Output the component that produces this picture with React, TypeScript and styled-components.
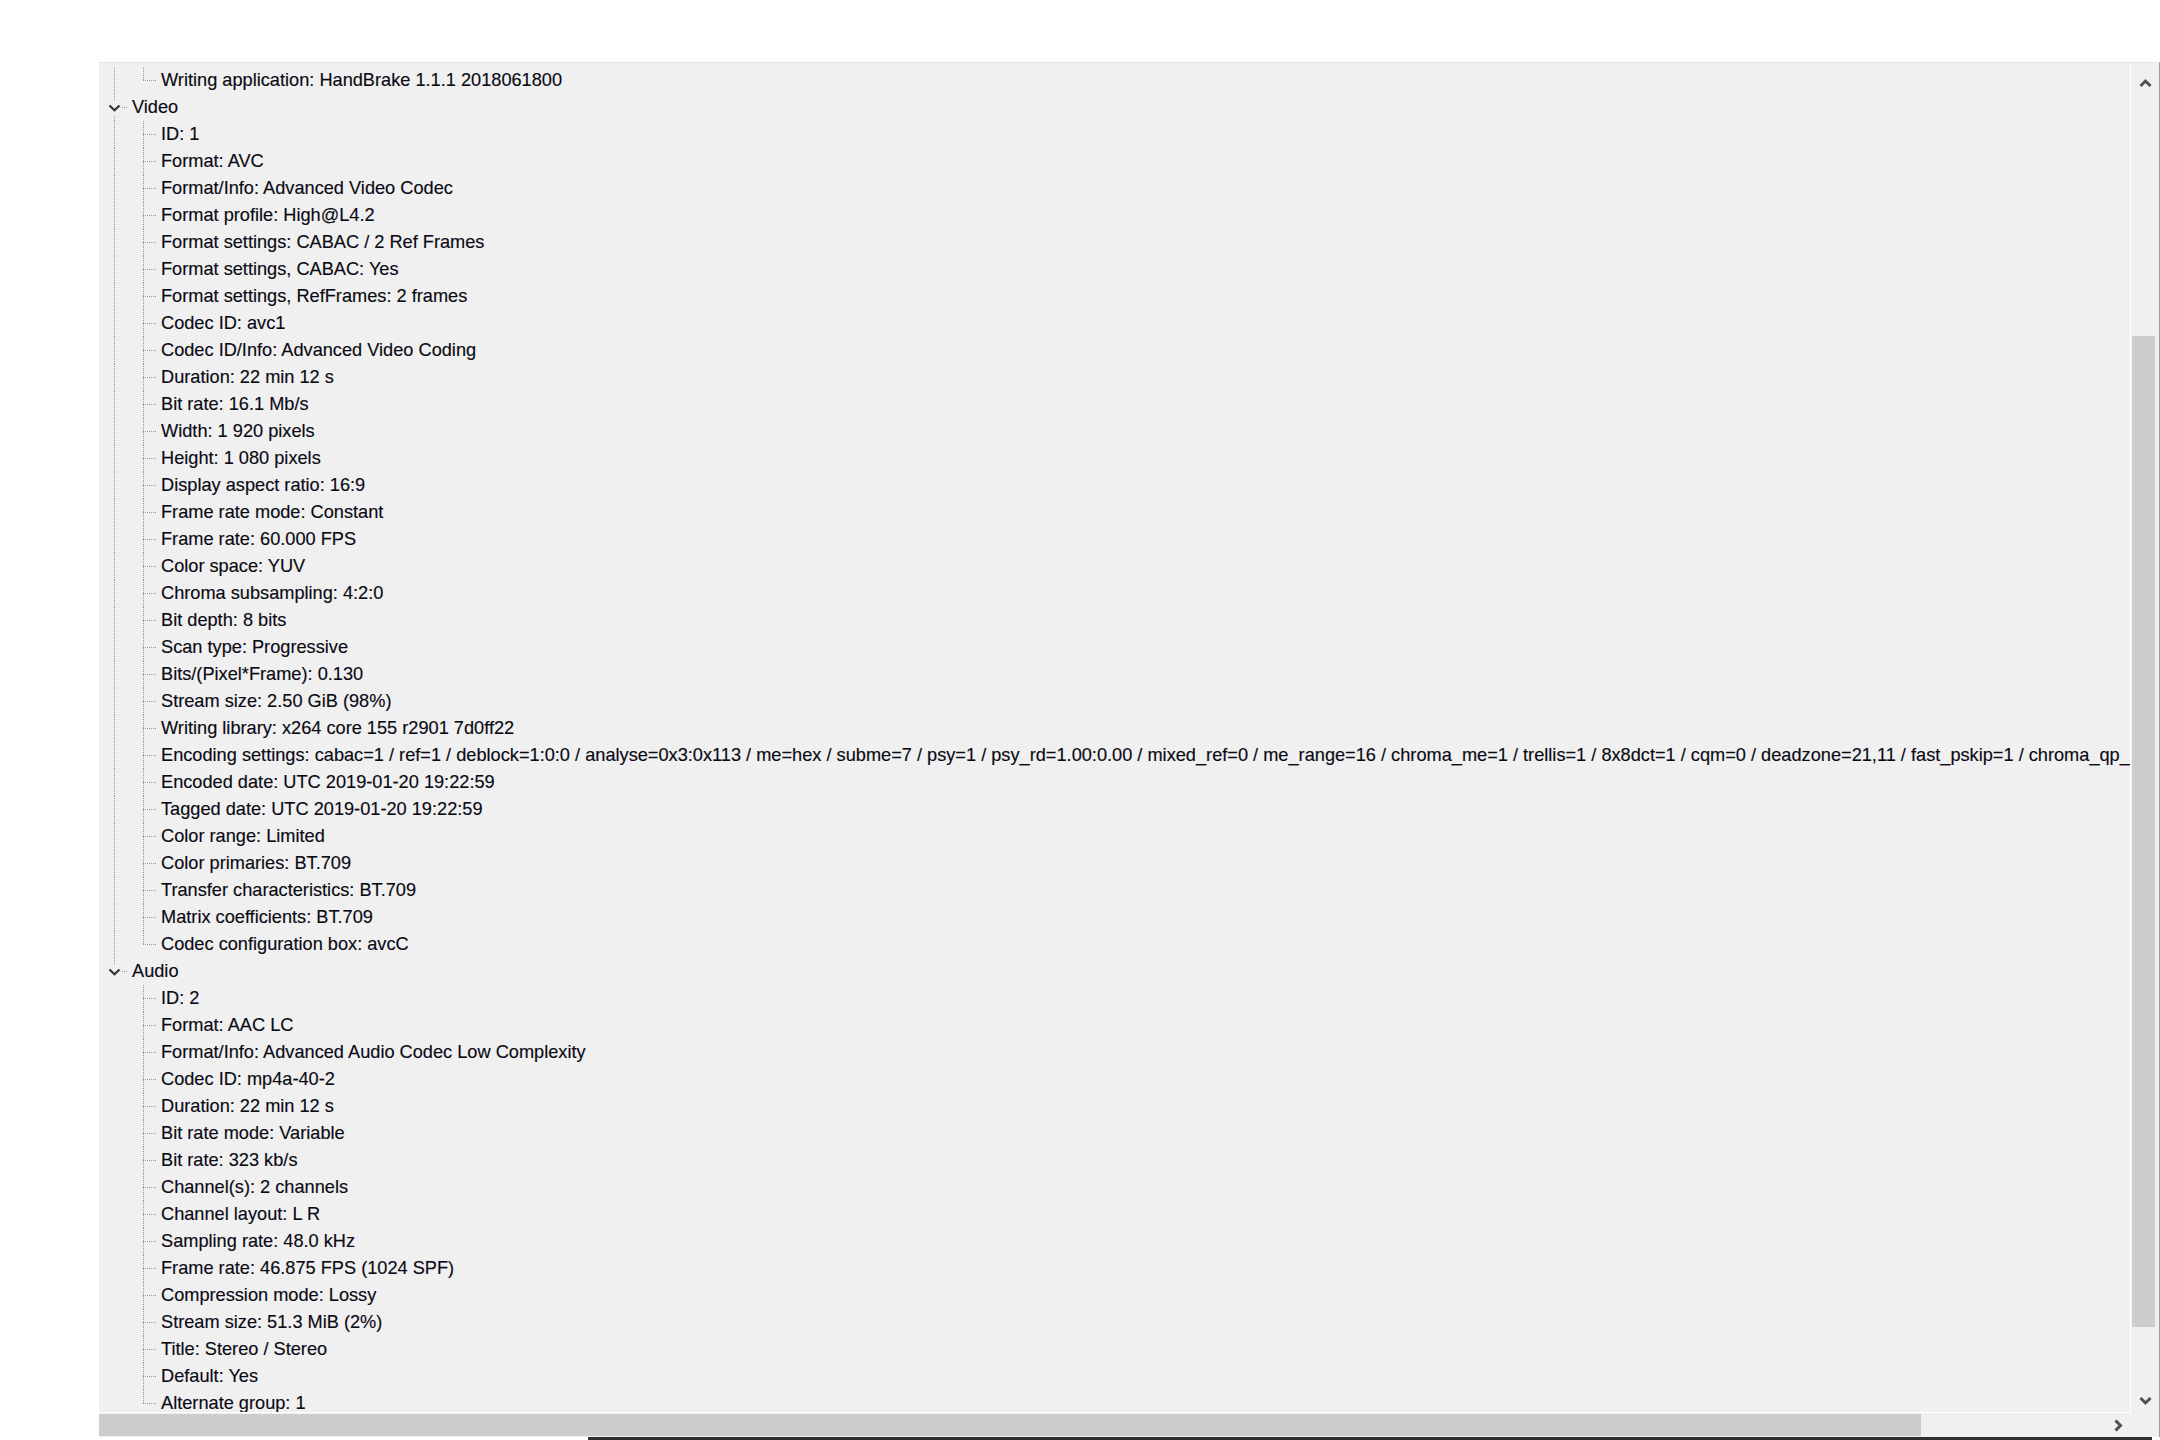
import React from 'react';
import styled, { createGlobalStyle, css } from 'styled-components';

const GlobalStyle = createGlobalStyle`
  html, body {
    margin: 0;
    padding: 0;
    background: #ffffff;
  }
  body {
    font-family: 'Liberation Sans', Arial, sans-serif;
  }
`;

const Page = styled.div`
  width: 2160px;
  height: 1440px;
  padding: 62px 0 0 99px;
  box-sizing: border-box;
  display: flex;
  flex-direction: column;
  overflow: hidden;
`;

const Panel = styled.section`
  width: 2061px;
  height: 1375px;
  box-sizing: border-box;
  border-top: 1px solid #e4e4e4;
  border-right: 1px solid #9c9c9c;
  background: #f0f0f0;
  display: grid;
  grid-template-columns: 1fr 28px;
  grid-template-rows: 1fr 24px;
`;

const TreeView = styled.div`
  border-right: 1px solid #ffffff;
  border-bottom: 1px solid #ffffff;
  padding-top: 4px;
  overflow: hidden;
  font-size: 18.2px;
  color: #0a0a14;
  -webkit-text-stroke: 0.15px #0a0a14;
`;

const Row = styled.div`
  height: 27px;
  display: flex;
  align-items: center;
  white-space: nowrap;
`;

const dotV = 'repeating-linear-gradient(to bottom, #999999 0 1px, transparent 1px 2px)';
const dotH = 'repeating-linear-gradient(to right, #999999 0 1px, transparent 1px 2px)';

type GuideKind = 'pipe' | 'tee' | 'elbow' | 'blank';

const guideStyles: Record<GuideKind, ReturnType<typeof css>> = {
  pipe: css`
    background-image: ${dotV};
    background-size: 1px 100%;
    background-position: 15px 0;
  `,
  tee: css`
    background-image: ${dotV}, ${dotH};
    background-size: 1px 100%, 14px 1px;
    background-position: 15px 0, 15px 13px;
  `,
  elbow: css`
    background-image: ${dotV}, ${dotH};
    background-size: 1px 14px, 14px 1px;
    background-position: 15px 0, 15px 13px;
  `,
  blank: css``,
};

const Guide = styled.span<{ $kind: GuideKind }>`
  flex: 0 0 29px;
  height: 100%;
  background-repeat: no-repeat;
  ${(p) => guideStyles[p.$kind]}
`;

const HeadGuide = styled.span<{ $last: boolean }>`
  flex: 0 0 29px;
  height: 100%;
  display: flex;
  align-items: center;
  background-repeat: no-repeat;
  background-image: ${dotV}, ${dotH};
  background-size: 1px ${(p) => (p.$last ? '14px' : '100%')}, 14px 1px;
  background-position: 15px 0, 15px 13px;
`;

const Toggle = styled.span`
  width: 15px;
  height: 14px;
  margin-left: 8px;
  background: #f0f0f0;
  display: flex;
  align-items: center;
  justify-content: center;
`;

const Label = styled.span`
  margin-left: 4px;
  line-height: 27px;
`;

const ScrollV = styled.div`
  display: flex;
  flex-direction: column;
  padding-top: 3px;
`;

const ArrowBtn = styled.div<{ $h: number; $w?: number }>`
  height: ${(p) => p.$h}px;
  width: ${(p) => (p.$w ? `${p.$w}px` : 'auto')};
  display: flex;
  align-items: center;
  justify-content: center;
  flex-shrink: 0;
`;

const TrackV = styled.div`
  flex: 1;
  display: flex;
  flex-direction: column;
  padding: 0 4px 0 1px;
`;

const ThumbV = styled.div<{ $top: number; $size: number }>`
  margin-top: ${(p) => p.$top}px;
  height: ${(p) => p.$size}px;
  background: #cdcdcd;
`;

const ScrollH = styled.div`
  display: flex;
  align-items: stretch;
  padding: 1px 0;
`;

const TrackH = styled.div`
  flex: 1;
  display: flex;
`;

const ThumbH = styled.div<{ $size: number }>`
  width: ${(p) => p.$size}px;
  background: #cdcdcd;
`;

const Corner = styled.div`
  background: #f0f0f0;
`;

const BottomEdge = styled.div`
  margin-left: 489px;
  width: 1564px;
  height: 3px;
  background: #2e2e2e;
`;

const Chevron = ({ dir, color = '#505050' }: { dir: 'up' | 'down' | 'right'; color?: string }) => {
  const pts =
    dir === 'up' ? '1.5,8 6.5,3 11.5,8' : dir === 'down' ? '1.5,2 6.5,7 11.5,2' : '2.5,1.5 7.5,6.5 2.5,11.5';
  const w = dir === 'right' ? 11 : 13;
  const h = dir === 'right' ? 13 : 10;
  return (
    <svg width={w} height={h} viewBox={`0 0 ${w} ${h}`}>
      <polyline points={pts} fill="none" stroke={color} strokeWidth="3" />
    </svg>
  );
};

const ExpandIcon = () => (
  <svg width="13" height="8" viewBox="0 0 13 8">
    <polyline points="1.5,1.5 6.5,6.2 11.5,1.5" fill="none" stroke="#333333" strokeWidth="2.2" />
  </svg>
);

interface ISection {
  title: string;
  items: string[];
}

// tail of the General block, its header is scrolled out of view
const generalTail = ['Writing application: HandBrake 1.1.1 2018061800'];

const sections: ISection[] = [
  {
    title: 'Video',
    items: [
      'ID: 1',
      'Format: AVC',
      'Format/Info: Advanced Video Codec',
      'Format profile: High@L4.2',
      'Format settings: CABAC / 2 Ref Frames',
      'Format settings, CABAC: Yes',
      'Format settings, RefFrames: 2 frames',
      'Codec ID: avc1',
      'Codec ID/Info: Advanced Video Coding',
      'Duration: 22 min 12 s',
      'Bit rate: 16.1 Mb/s',
      'Width: 1 920 pixels',
      'Height: 1 080 pixels',
      'Display aspect ratio: 16:9',
      'Frame rate mode: Constant',
      'Frame rate: 60.000 FPS',
      'Color space: YUV',
      'Chroma subsampling: 4:2:0',
      'Bit depth: 8 bits',
      'Scan type: Progressive',
      'Bits/(Pixel*Frame): 0.130',
      'Stream size: 2.50 GiB (98%)',
      'Writing library: x264 core 155 r2901 7d0ff22',
      'Encoding settings: cabac=1 / ref=1 / deblock=1:0:0 / analyse=0x3:0x113 / me=hex / subme=7 / psy=1 / psy_rd=1.00:0.00 / mixed_ref=0 / me_range=16 / chroma_me=1 / trellis=1 / 8x8dct=1 / cqm=0 / deadzone=21,11 / fast_pskip=1 / chroma_qp_offset=-2 / threads=12 / lookahead_threads=2 / sliced_threads=0',
      'Encoded date: UTC 2019-01-20 19:22:59',
      'Tagged date: UTC 2019-01-20 19:22:59',
      'Color range: Limited',
      'Color primaries: BT.709',
      'Transfer characteristics: BT.709',
      'Matrix coefficients: BT.709',
      'Codec configuration box: avcC',
    ],
  },
  {
    title: 'Audio',
    items: [
      'ID: 2',
      'Format: AAC LC',
      'Format/Info: Advanced Audio Codec Low Complexity',
      'Codec ID: mp4a-40-2',
      'Duration: 22 min 12 s',
      'Bit rate mode: Variable',
      'Bit rate: 323 kb/s',
      'Channel(s): 2 channels',
      'Channel layout: L R',
      'Sampling rate: 48.0 kHz',
      'Frame rate: 46.875 FPS (1024 SPF)',
      'Compression mode: Lossy',
      'Stream size: 51.3 MiB (2%)',
      'Title: Stereo / Stereo',
      'Default: Yes',
      'Alternate group: 1',
    ],
  },
];

const ItemRow = ({ text, outer, inner }: { text: string; outer: GuideKind; inner: GuideKind }) => (
  <Row>
    <Guide $kind={outer} />
    <Guide $kind={inner} />
    <Label>{text}</Label>
  </Row>
);

const App = () => {
  return (
    <Page>
      <GlobalStyle />
      <Panel>
        <TreeView>
          {generalTail.map((t, i) => (
            <ItemRow key={t} text={t} outer="pipe" inner={i === generalTail.length - 1 ? 'elbow' : 'tee'} />
          ))}
          {sections.map((s, si) => {
            const last = si === sections.length - 1;
            return (
              <React.Fragment key={s.title}>
                <Row>
                  <HeadGuide $last={last}>
                    <Toggle>
                      <ExpandIcon />
                    </Toggle>
                  </HeadGuide>
                  <Label>{s.title}</Label>
                </Row>
                {s.items.map((t, i) => (
                  <ItemRow
                    key={t}
                    text={t}
                    outer={last ? 'blank' : 'pipe'}
                    inner={i === s.items.length - 1 ? 'elbow' : 'tee'}
                  />
                ))}
              </React.Fragment>
            );
          })}
        </TreeView>
        <ScrollV>
          <ArrowBtn $h={34}>
            <Chevron dir="up" />
          </ArrowBtn>
          <TrackV>
            <ThumbV $top={236} $size={991} />
          </TrackV>
          <ArrowBtn $h={24}>
            <Chevron dir="down" />
          </ArrowBtn>
        </ScrollV>
        <ScrollH>
          <TrackH>
            <ThumbH $size={1822} />
          </TrackH>
          <ArrowBtn $h={22} $w={26}>
            <Chevron dir="right" />
          </ArrowBtn>
        </ScrollH>
        <Corner />
      </Panel>
      <BottomEdge />
    </Page>
  );
};

export default App;
